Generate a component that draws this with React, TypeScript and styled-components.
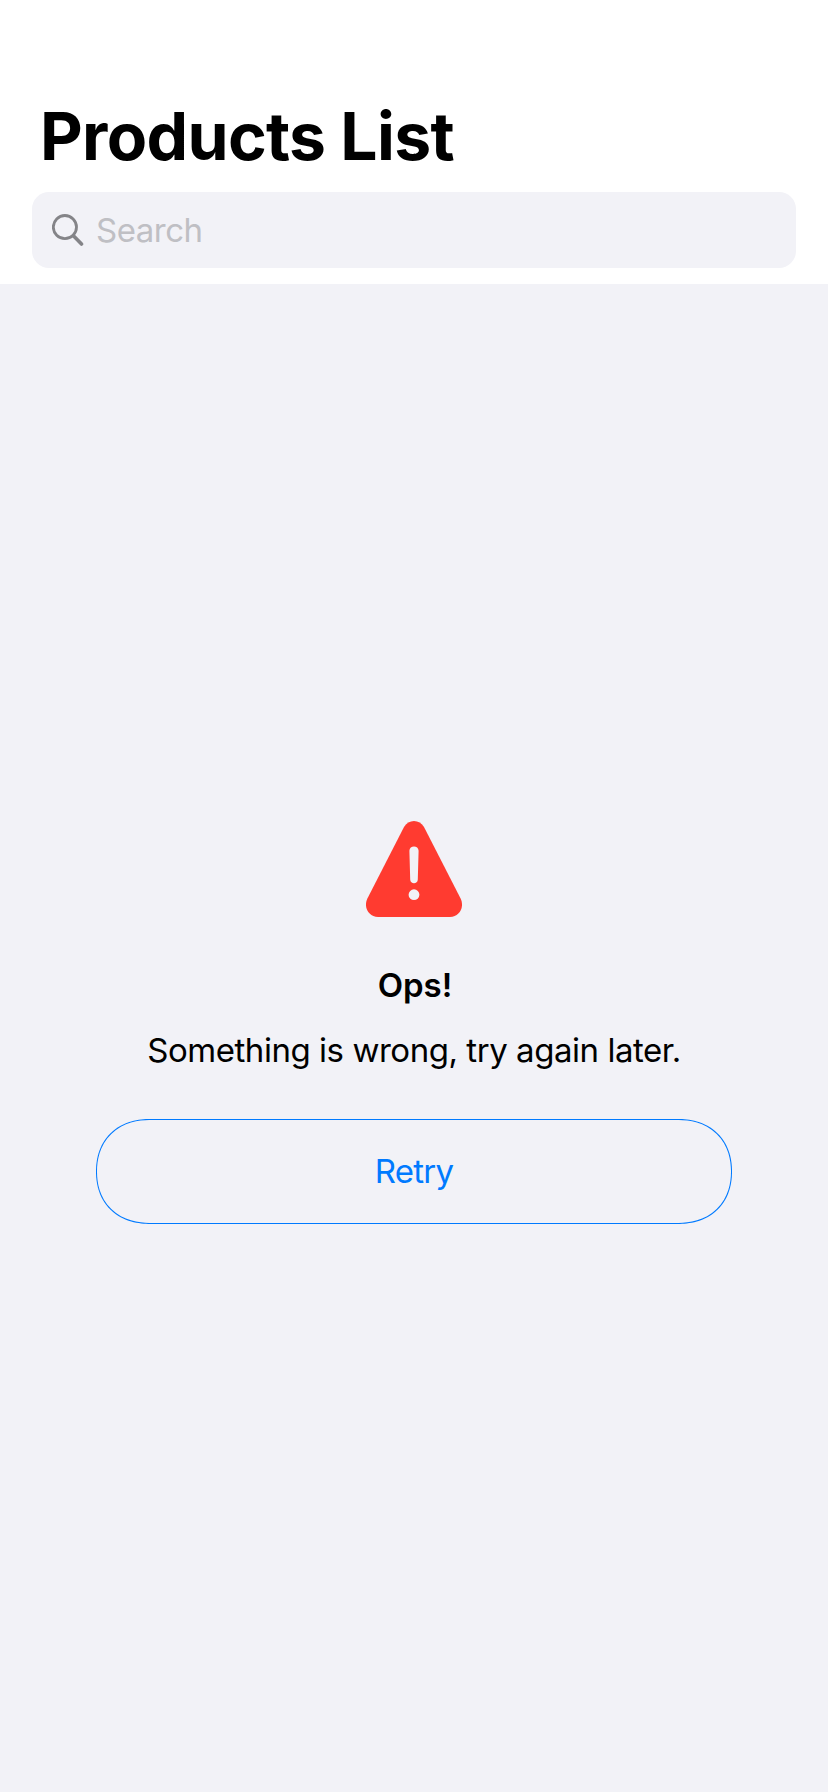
import React from "react";
import styled, { createGlobalStyle } from "styled-components";

const GlobalStyle = createGlobalStyle`
  * { box-sizing: border-box; }
  body { margin: 0; background: #f2f2f7; font-family: Inter, "Liberation Sans", sans-serif; }
`;

const Screen = styled.div`
  display: flex;
  flex-direction: column;
  height: 1792px;
  background: #f2f2f7;
`;

const Header = styled.header`
  display: flex;
  flex-direction: column;
  height: 284px;
  padding: 96px 32px 16px;
  background: #fff;
`;

const Title = styled.h1`
  margin: 0 0 16px;
  padding-left: 8px;
  font-size: 66px;
  font-weight: 700;
  line-height: 80px;
  letter-spacing: -0.66px;
  color: #000;
  white-space: nowrap;
`;

const SearchField = styled.label`
  display: flex;
  align-items: center;
  height: 76px;
  padding-left: 20px;
  border-radius: 17px;
  background: #f2f2f7;
`;

const SearchIcon = styled.svg`
  width: 32px;
  height: 32px;
  margin-right: 12px;
`;

const Placeholder = styled.span`
  font-size: 33px;
  line-height: 40px;
  letter-spacing: -0.5px;
  color: #bfbfc4;
`;

const ErrorState = styled.main`
  display: flex;
  flex-direction: column;
  align-items: center;
  padding: 537px 96px 0;
`;

const WarningIcon = styled.svg`
  width: 96px;
  height: 96px;
  margin-bottom: 48px;
`;

const Heading = styled.h2`
  margin: 0 0 25px;
  padding-left: 2px;
  font-size: 33px;
  font-weight: 600;
  line-height: 40px;
`;

const Message = styled.p`
  margin: 0 0 49px;
  font-size: 33px;
  line-height: 40px;
  letter-spacing: -0.46px;
  white-space: nowrap;
`;

const RetryButton = styled.button`
  width: 636px;
  height: 105px;
  padding: 0 0 2px;
  border: 1px solid #007aff;
  border-radius: 54px / 52.5px;
  corner-shape: superellipse(1.14);
  background: transparent;
  color: #007aff;
  font: 400 33px/40px Inter, "Liberation Sans", sans-serif;
  letter-spacing: -0.8px;
`;

export default function App() {
  return (
    <>
      <GlobalStyle />
      <Screen>
        <Header>
          <Title>Products List</Title>
          <SearchField>
            <SearchIcon viewBox="0 0 32 32" fill="none" stroke="#848488" aria-hidden="true">
              <circle cx="12.9" cy="13.1" r="11.6" strokeWidth="2.8" />
              <path d="M21.4 21.7 L29.5 30" strokeWidth="3.6" strokeLinecap="round" />
            </SearchIcon>
            <Placeholder>Search</Placeholder>
          </SearchField>
        </Header>
        <ErrorState>
          <WarningIcon viewBox="0 0 96 96" aria-hidden="true">
            <path
              fill="#ff3b30"
              d="M38 6 C42.3 -2 53.7 -2 58 6 L94.6 77.5 C98.8 86 93.5 96 84 96 H12 C2.5 96 -2.8 86 1.4 77.5 Z"
            />
            <path
              fill="#f2f2f7"
              d="M43.4 29.8 C43.4 24 52.6 24 52.6 29.8 L51.8 58.4 C51.7 63.5 44.3 63.5 44.2 58.4 Z"
            />
            <circle cx="48" cy="73.7" r="5.4" fill="#f2f2f7" />
          </WarningIcon>
          <Heading>Ops!</Heading>
          <Message>Something is wrong, try again later.</Message>
          <RetryButton type="button">Retry</RetryButton>
        </ErrorState>
      </Screen>
    </>
  );
}
